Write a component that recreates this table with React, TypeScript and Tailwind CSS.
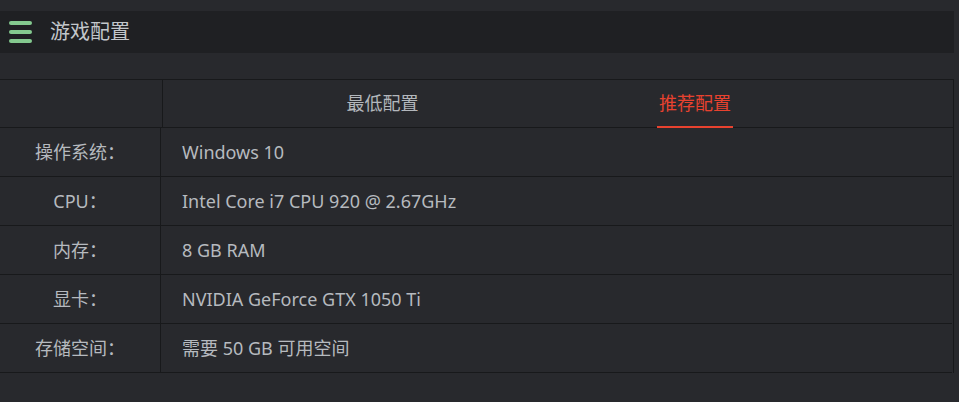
const rows = [
  { label: '操作系统：', value: 'Windows 10' },
  { label: 'CPU：', value: 'Intel Core i7 CPU 920 @ 2.67GHz' },
  { label: '内存：', value: '8 GB RAM' },
  { label: '显卡：', value: 'NVIDIA GeForce GTX 1050 Ti' },
  { label: '存储空间：', value: '需要 50 GB 可用空间' },
];

const font = { fontFamily: '"Noto Sans", "Noto Sans CJK SC", sans-serif' };

export default function App() {
  return (
    <div className="min-h-screen w-full bg-[#28292d] pt-[11px] text-[#b6babf]" style={font}>
      {/* title bar */}
      <div className="flex h-[42px] w-[954px] items-center bg-[#1f2023]">
        <div className="ml-[9px] flex flex-col gap-[5px]">
          <span className="block h-[4px] w-[23px] rounded-full bg-[#84c98f]" />
          <span className="block h-[4px] w-[23px] rounded-full bg-[#84c98f]" />
          <span className="block h-[4px] w-[23px] rounded-full bg-[#84c98f]" />
        </div>
        <span className="ml-[18px] text-[20px] leading-none text-[#c3c7cb]">游戏配置</span>
      </div>

      {/* spec table */}
      <div className="mt-[26px] w-[954px] border-t border-r border-[#18191b]">
        <div className="flex h-[48px] border-b border-[#18191b]">
          <div className="w-[163px] shrink-0 border-r border-[#18191b]" />
          <div className="flex flex-1 pl-[63px]">
            <button className="flex w-[313px] items-center justify-center text-[18px] text-[#b3b7bc]">
              最低配置
            </button>
            <button className="relative ml-[118px] flex w-[76px] items-center justify-center text-[18px] text-[#e8422f]">
              推荐配置
              <span className="absolute bottom-[-1px] left-0 h-[2px] w-full bg-[#e8422f]" />
            </button>
          </div>
        </div>
        <div className="mr-px">
          {rows.map((r) => (
            <div key={r.label} className="flex h-[49px] border-b border-[#18191b] text-[18px]">
              <div className="flex w-[161px] shrink-0 items-center justify-center border-r border-[#18191b]">
                {r.label}
              </div>
              <div className="flex items-center pl-[21px]">{r.value}</div>
            </div>
          ))}
        </div>
      </div>
    </div>
  );
}
